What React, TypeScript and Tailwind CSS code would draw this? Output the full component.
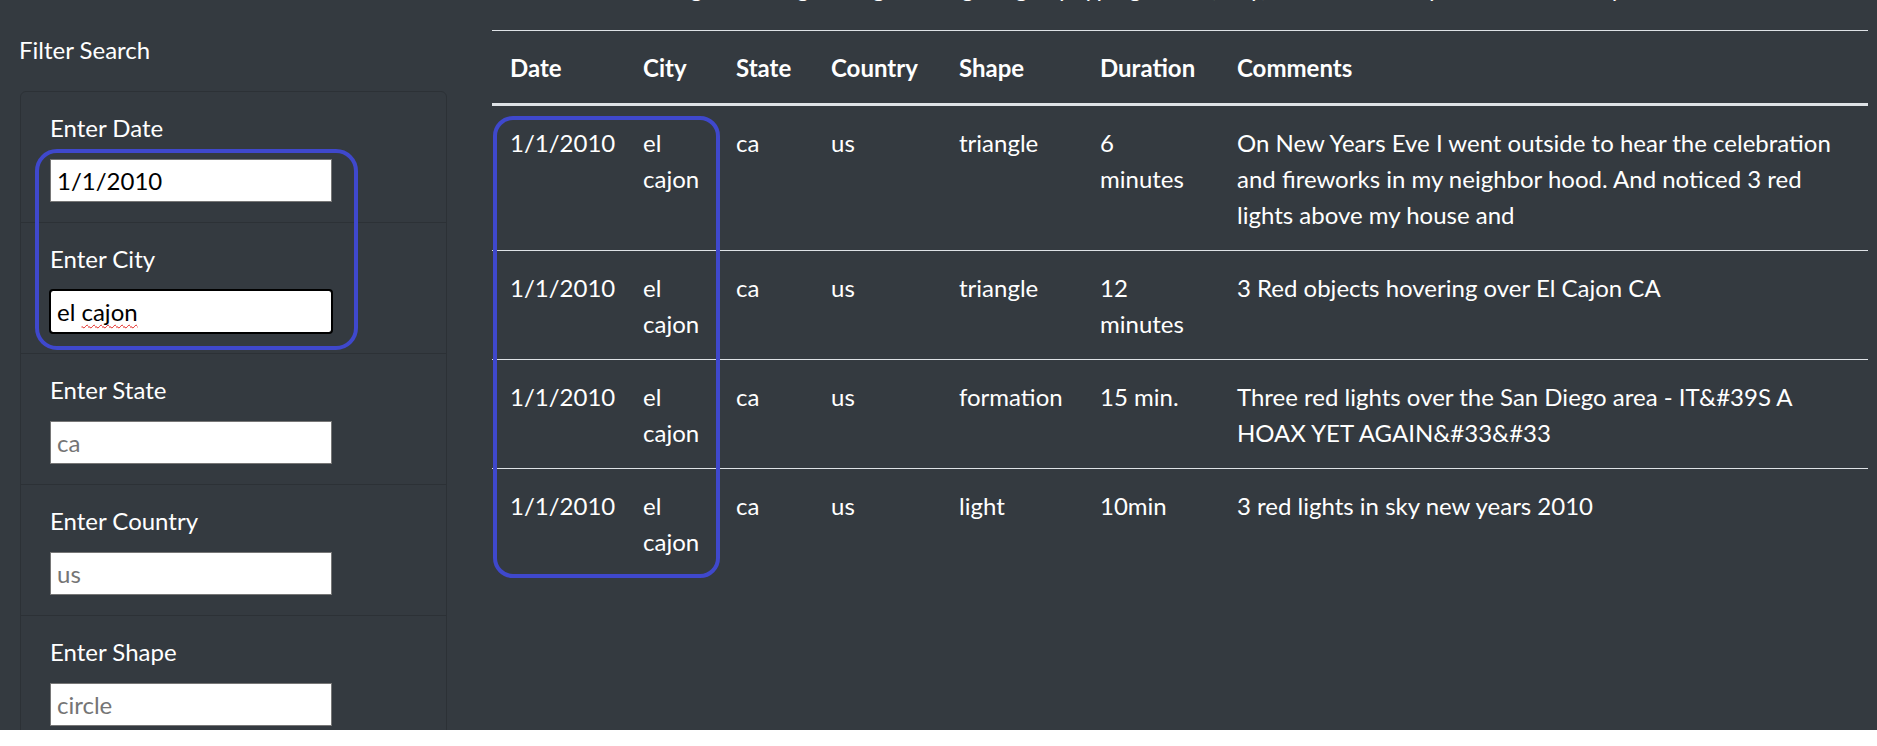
const filters = [
  { label: "Enter Date", value: "1/1/2010", placeholder: "1/1/2010" },
  { label: "Enter City", value: "el cajon", placeholder: "el cajon", focused: true },
  { label: "Enter State", placeholder: "ca" },
  { label: "Enter Country", placeholder: "us" },
  { label: "Enter Shape", placeholder: "circle" },
];

const sightings = [
  {
    duration: "6 minutes",
    shape: "triangle",
    comments:
      "On New Years Eve I went outside to hear the celebration and fireworks in my neighbor hood. And noticed 3 red lights above my house and",
  },
  { duration: "12 minutes", shape: "triangle", comments: "3 Red objects hovering over El Cajon CA" },
  {
    duration: "15 min.",
    shape: "formation",
    comments: "Three red lights over the San Diego area - IT&#39S A HOAX YET AGAIN&#33&#33",
  },
  { duration: "10min", shape: "light", comments: "3 red lights in sky new years 2010" },
];

function FilterItem({ label, value, placeholder, focused }: { label: string; value?: string; placeholder: string; focused?: boolean }) {
  return (
    <li className="border-b border-[#2c3136] pl-[29px] pr-[30px] pt-[18px] pb-[20px]">
      <label className="block">{label}</label>
      <div className="relative mt-[13px] w-[282px]">
        <input
          type="text"
          defaultValue={value}
          placeholder={placeholder}
          spellCheck={false}
          className={
            focused
              ? "block h-[43px] w-[282px] rounded-[3px] border border-[#767676] bg-white px-[6px] text-black outline-2 outline-black outline-offset-[-1px]"
              : "block h-[43px] w-[282px] border border-[#767676] bg-white px-[6px] text-black placeholder:text-[#757575] outline-none"
          }
        />
        {focused && (
          <span className="pointer-events-none absolute left-[7px] top-[3px] text-transparent">
            el{" "}
            <span className="underline decoration-wavy decoration-[#e0201b] decoration-1 underline-offset-[4px]">cajon</span>
          </span>
        )}
      </div>
    </li>
  );
}

export default function App() {
  return (
    <div className="relative flex h-[730px] overflow-hidden bg-[#343a40] font-['Lato','Open_Sans',sans-serif] text-[24px] leading-[36px] text-white">
      <aside className="w-[469px] shrink-0 pl-[19px] pr-[22px] pt-[32px]">
        <h5>Filter Search</h5>
        <div className="mt-[23px] ml-[1px] rounded-[6px] border border-[#2c3136]">
          <ul>
            {filters.map((f) => (
              <FilterItem key={f.label} {...f} />
            ))}
          </ul>
        </div>
      </aside>

      <main className="flex-1 pl-[23px] pr-[9px]">
        <p className="-mt-[30px] text-center">
          Begin filtering through the sightings by typing a date, city, state or country below to see any results
        </p>
        <table className="mt-[24px] w-full table-fixed border-collapse border-t border-[#dee2e6] text-left">
          <colgroup>
            <col className="w-[133px]" />
            <col className="w-[93px]" />
            <col className="w-[95px]" />
            <col className="w-[128px]" />
            <col className="w-[141px]" />
            <col className="w-[137px]" />
            <col />
          </colgroup>
          <thead>
            <tr className="border-b-[3px] border-[#dee2e6]">
              {["Date", "City", "State", "Country", "Shape", "Duration", "Comments"].map((h) => (
                <th key={h} className="px-[18px] pt-[19px] pb-[17px] align-bottom font-bold">
                  {h}
                </th>
              ))}
            </tr>
          </thead>
          <tbody>
            {sightings.map((s, i) => (
              <tr key={i} className={i > 0 ? "border-t border-[#dee2e6]" : ""}>
                <td className="whitespace-nowrap px-[18px] pt-[19px] pb-[17px] align-top">1/1/2010</td>
                <td className="px-[18px] pt-[19px] pb-[17px] align-top">el cajon</td>
                <td className="px-[18px] pt-[19px] pb-[17px] align-top">ca</td>
                <td className="px-[18px] pt-[19px] pb-[17px] align-top">us</td>
                <td className="px-[18px] pt-[19px] pb-[17px] align-top">{s.shape}</td>
                <td className="px-[18px] pt-[19px] pb-[17px] align-top">{s.duration}</td>
                <td className="px-[18px] pt-[19px] pb-[17px] align-top">{s.comments}</td>
              </tr>
            ))}
          </tbody>
        </table>
      </main>

      {/* highlight annotations */}
      <div className="pointer-events-none absolute left-[35px] top-[149px] h-[201px] w-[323px] rounded-[22px] border-4 border-[#3f48cc]" />
      <div className="pointer-events-none absolute left-[493px] top-[116px] h-[462px] w-[227px] rounded-[20px] border-4 border-[#3f48cc]" />
    </div>
  );
}
